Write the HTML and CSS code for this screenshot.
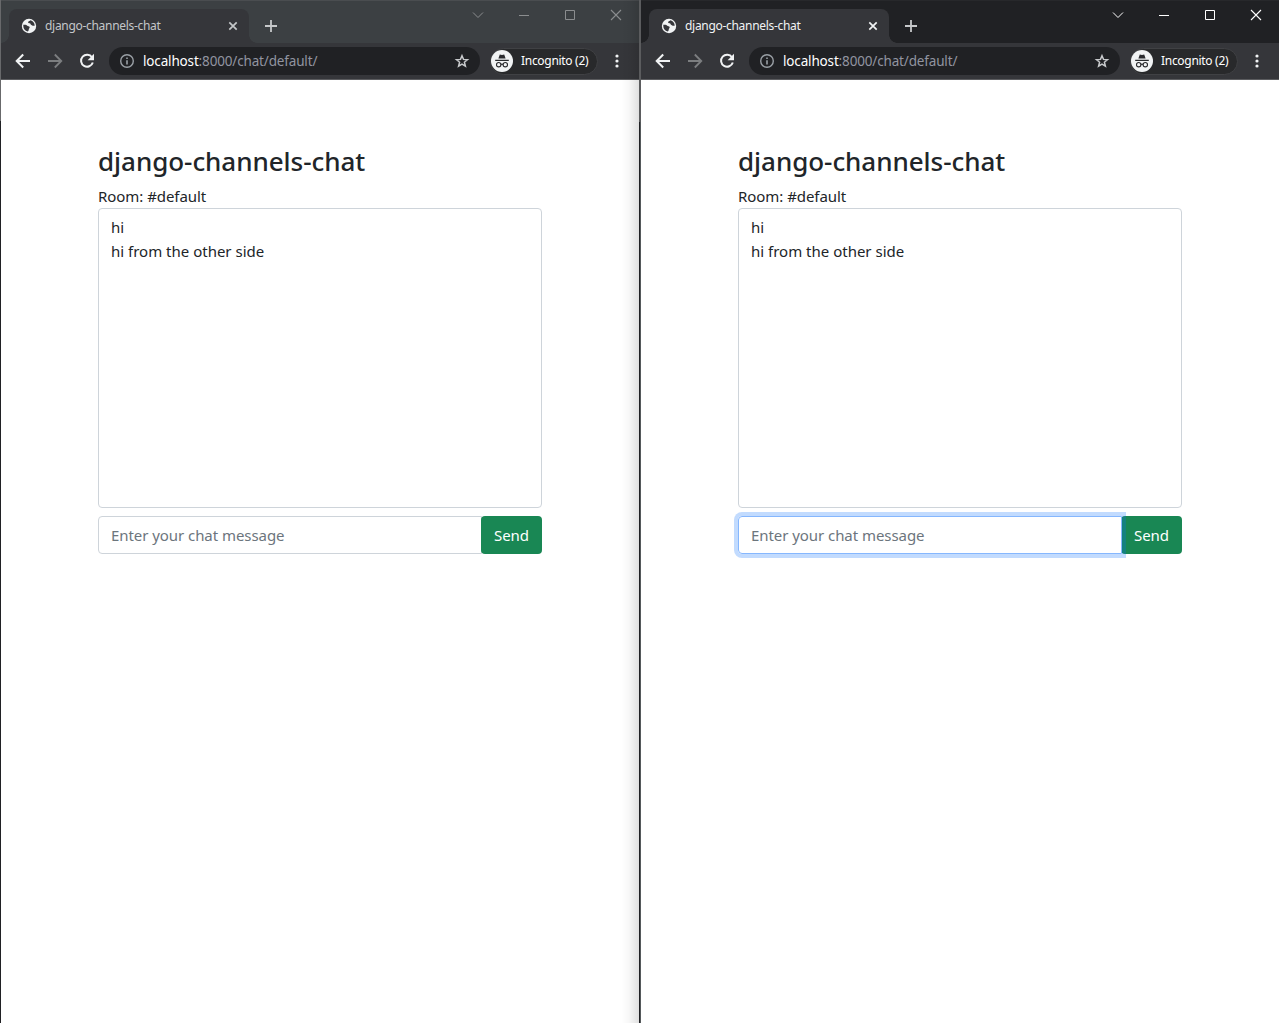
FILE: index.html
```html
<!DOCTYPE html>
<html lang="en">
<head>
<meta charset="utf-8">
<title>django-channels-chat</title>
<link rel="stylesheet" href="styles.css">
</head>
<body>
<svg class="sprite" aria-hidden="true">
  <symbol id="globe" viewBox="0 0 16 16"><circle cx="8" cy="8" r="7.2" fill="#f1f3f4"/><path d="M2.300 6.700l2.200.1c1.300.1 1.700 1.300 3 1.400 1 .1 1.300.6 1.100 1.600L8 10.700c-.5.800-.1 2-1.300 2.900C4 13 2.300 10.600 2.300 8zM9.400 2.300c-.3.900-2 .8-2.300 1.800-.2 1 .6 1.200 1.700 1.200.9.1.5 1.400 1.500 1.700.9.300 1.200.9 2.200.8l1.200-.1C13.700 5 12 2.800 9.400 2.300z" fill="#35363a"/></symbol>
  <symbol id="close" viewBox="0 0 16 16"><path d="M4.300 4.300l7.400 7.400m0-7.400l-7.400 7.400" stroke="currentColor" stroke-width="1.700"/></symbol>
  <symbol id="plus" viewBox="0 0 16 16"><path d="M8 2v12M2 8h12" stroke="currentColor" stroke-width="1.800"/></symbol>
  <symbol id="back" viewBox="0 0 16 16"><path d="M15 8H2M8.200 1.500L1.700 8l6.500 6.500" fill="none" stroke="currentColor" stroke-width="2"/></symbol>
  <symbol id="forward" viewBox="0 0 16 16"><path d="M1 8h13M7.800 1.500L14.300 8l-6.500 6.500" fill="none" stroke="currentColor" stroke-width="1.800"/></symbol>
  <symbol id="reload" viewBox="0 0 16 16"><path d="M13 4.300A6 6 0 1 0 13.800 9.500" fill="none" stroke="currentColor" stroke-width="2"/><path d="M15 .8v6.400H8.600z" fill="currentColor"/></symbol>
  <symbol id="info" viewBox="0 0 16 16"><circle cx="8" cy="8" r="6.300" fill="none" stroke="currentColor" stroke-width="1.400"/><path d="M8 7.200v4.300M8 4.400V6" stroke="currentColor" stroke-width="1.600"/></symbol>
  <symbol id="star" viewBox="0 0 16 16"><path d="M8 2.700l1.500 3.700 4 .3-3.100 2.600 1 3.900L8 11.100l-3.400 2.100 1-3.900-3.100-2.600 4-.3z" fill="none" stroke="currentColor" stroke-width="1.500"/></symbol>
  <symbol id="incognito" viewBox="0 0 22 22"><circle cx="11" cy="11" r="11" fill="#f1f3f4"/><path d="M8.800 4.500l2.200.5 2.200-.5 1.400 4H7.400zM4.200 9.800h13.600v1.200H4.200z" fill="#292a2d"/><g fill="none" stroke="#292a2d" stroke-width="1.100"><circle cx="7.700" cy="14.700" r="2.200"/><circle cx="14.300" cy="14.700" r="2.200"/><path d="M9.900 14.500q1.100-.8 2.200 0"/></g></symbol>
  <symbol id="dots" viewBox="0 0 4 14"><g fill="currentColor"><circle cx="2" cy="2" r="1.600"/><circle cx="2" cy="7" r="1.600"/><circle cx="2" cy="12" r="1.600"/></g></symbol>
  <symbol id="chevron" viewBox="0 0 12 12"><path d="M1 3.500l5 5 5-5" fill="none" stroke="currentColor"/></symbol>
  <symbol id="minimize" viewBox="0 0 12 12"><path d="M1 6.500h10" stroke="currentColor"/></symbol>
  <symbol id="maximize" viewBox="0 0 12 12"><path d="M1.500 1.500h9v9h-9z" fill="none" stroke="currentColor"/></symbol>
  <symbol id="exit" viewBox="0 0 12 12"><path d="M1 1l10 10M11 1L1 11" stroke="currentColor" stroke-width="1.100"/></symbol>
</svg>

<section class="window inactive">
  <header class="titlebar">
    <div class="tab"><svg class="favicon"><use href="#globe"/></svg><span class="tab-title">django-channels-chat</span><svg class="tab-close"><use href="#close"/></svg></div>
    <svg class="new-tab"><use href="#plus"/></svg>
    <div class="controls"><span><svg><use href="#chevron"/></svg></span><span><svg><use href="#minimize"/></svg></span><span><svg><use href="#maximize"/></svg></span><span><svg><use href="#exit"/></svg></span></div>
  </header>
  <nav class="toolbar">
    <span class="nav-button"><svg><use href="#back"/></svg></span><span class="nav-button disabled"><svg><use href="#forward"/></svg></span><span class="nav-button"><svg><use href="#reload"/></svg></span>
    <div class="address"><svg class="info"><use href="#info"/></svg><span class="url"><b>localhost</b>:8000/chat/default/</span><svg class="star"><use href="#star"/></svg></div>
    <div class="profile"><svg><use href="#incognito"/></svg><span>Incognito (2)</span></div>
    <svg class="menu"><use href="#dots"/></svg>
  </nav>
  <main class="page">
    <h1>django-channels-chat</h1>
    <div class="room">Room: #default</div>
    <div class="log"><p>hi</p><p>hi from the other side</p></div>
    <div class="composer"><div class="message">Enter your chat message</div><button class="send">Send</button></div>
  </main>
</section>

<section class="window active">
  <header class="titlebar">
    <div class="tab"><svg class="favicon"><use href="#globe"/></svg><span class="tab-title">django-channels-chat</span><svg class="tab-close"><use href="#close"/></svg></div>
    <svg class="new-tab"><use href="#plus"/></svg>
    <div class="controls"><span><svg><use href="#chevron"/></svg></span><span><svg><use href="#minimize"/></svg></span><span><svg><use href="#maximize"/></svg></span><span><svg><use href="#exit"/></svg></span></div>
  </header>
  <nav class="toolbar">
    <span class="nav-button"><svg><use href="#back"/></svg></span><span class="nav-button disabled"><svg><use href="#forward"/></svg></span><span class="nav-button"><svg><use href="#reload"/></svg></span>
    <div class="address"><svg class="info"><use href="#info"/></svg><span class="url"><b>localhost</b>:8000/chat/default/</span><svg class="star"><use href="#star"/></svg></div>
    <div class="profile"><svg><use href="#incognito"/></svg><span>Incognito (2)</span></div>
    <svg class="menu"><use href="#dots"/></svg>
  </nav>
  <main class="page">
    <h1>django-channels-chat</h1>
    <div class="room">Room: #default</div>
    <div class="log"><p>hi</p><p>hi from the other side</p></div>
    <div class="composer"><div class="message focused">Enter your chat message</div><button class="send">Send</button></div>
  </main>
</section>
</body>
</html>
```
FILE: styles.css
```css
* { box-sizing: border-box; }
body { margin: 0; height: 1023px; display: flex; overflow: hidden; background: #fff; font-family: "Noto Sans", "Open Sans", sans-serif; }
svg { display: block; flex: none; }
.sprite { position: absolute; width: 0; height: 0; }

.window { position: relative; display: flex; flex-direction: column; height: 1023px; flex: none; }
.inactive { width: 639px; border-left: 1px solid; border-image: linear-gradient(#68696b 0 122px, #202124 122px) 1; }
.active { width: 640px; padding-left: 2px; }
.active::before { content: ""; position: absolute; left: 0; top: 0; width: 2px; height: 100%; background: linear-gradient(#5b5c5e 0 122px, transparent 122px), linear-gradient(90deg, #202124 1px, #55595b 1px); }
.inactive::after { content: ""; position: absolute; right: 0; top: 0; width: 18px; height: 100%; background: linear-gradient(90deg, transparent, rgba(0,0,0,.03) 45%, rgba(0,0,0,.12)); }

.titlebar { height: 43px; display: flex; background: #202124; border-top: 1px solid #27282b; color: #fff; }
.inactive .titlebar { background: #3c4043; border-top-color: #4a4d50; color: #8b8d8f; }
.tab { position: relative; width: 240px; height: 34px; margin: 8px 0 0 8px; padding: 0 8px 0 12px; display: flex; align-items: center; background: #35363a; border-radius: 8px 8px 0 0; color: #f1f3f4; }
.tab::before, .tab::after { content: ""; position: absolute; bottom: 0; width: 8px; height: 8px; }
.tab::before { left: -8px; background: radial-gradient(circle at 0 0, transparent 7.5px, #35363a 8px); }
.tab::after { right: -8px; background: radial-gradient(circle at 100% 0, transparent 7.5px, #35363a 8px); }
.inactive .tab { color: #c4c7c9; }
.favicon { width: 16px; height: 16px; }
.tab-title { margin-left: 8px; font-size: 12px; line-height: 16px; letter-spacing: -.3px; white-space: nowrap; }
.tab-close { width: 16px; height: 16px; margin-left: auto; }
.new-tab { width: 16px; height: 16px; margin: 17px 0 0 14px; color: #c6c8ca; }
.controls { display: flex; margin-left: auto; height: 28px; }
.controls span { width: 46px; display: grid; place-items: center; }
.controls svg { width: 12px; height: 12px; }

.toolbar { height: 37px; display: flex; align-items: center; padding-left: 6px; background: #35363a; border-bottom: 1px solid #5b5c5f; color: #f1f3f4; }
.nav-button { width: 32px; height: 32px; display: grid; place-items: center; }
.nav-button svg { width: 16px; height: 16px; }
.disabled { color: #7c7e80; }
.address { width: 371px; height: 28px; margin-left: 6px; padding: 0 10px; display: flex; align-items: center; background: #202124; border-radius: 14px; }
.info { width: 16px; height: 16px; color: #9aa0a6; }
.url { margin-left: 8px; color: #9194a0; font-size: 13.5px; line-height: 20px; letter-spacing: -.16px; white-space: nowrap; }
.url b { font-weight: 400; color: #fff; }
.star { width: 16px; height: 16px; margin-left: auto; color: #c8cacc; }
.profile { width: 108px; height: 27px; margin-left: 10px; padding-left: 1px; display: flex; align-items: center; background: #28292b; border: 1px solid #404144; border-radius: 14px; }
.profile svg { width: 22px; height: 22px; margin-left: -1px; }
.profile span { margin-left: 8px; font-size: 12px; line-height: 16px; letter-spacing: -.3px; white-space: nowrap; color: #fff; }
.menu { width: 4px; height: 14px; margin-left: 17px; }

.page { padding: 65.4px 97px 0; color: #212529; font-size: 15px; line-height: 24px; white-space: nowrap; }
h1 { margin: 0 0 5px; font-size: 26px; font-weight: 500; line-height: 33.6px; letter-spacing: -.04px; }
.room { letter-spacing: -.05px; }
.log { height: 300px; padding: 6px 12px; border: 1px solid #ced4da; border-radius: 4px; }
.log p { margin: 0; }
.composer { width: 444px; height: 38px; margin-top: 8px; display: flex; }
.message { flex: 1; padding: 6px 12px; border: 1px solid #ced4da; border-radius: 4px 0 0 4px; color: #6c757d; letter-spacing: -.06px; }
.focused { position: relative; z-index: 1; border-color: #86b7fe; box-shadow: 0 0 0 4px rgba(13,110,253,.25); }
.send { width: 61px; height: 38px; margin-left: -1px; padding: 0; border: 0; border-radius: 4px; background: #198754; color: #fff; font: 15px/24px "Noto Sans", "Open Sans", sans-serif; }
```
